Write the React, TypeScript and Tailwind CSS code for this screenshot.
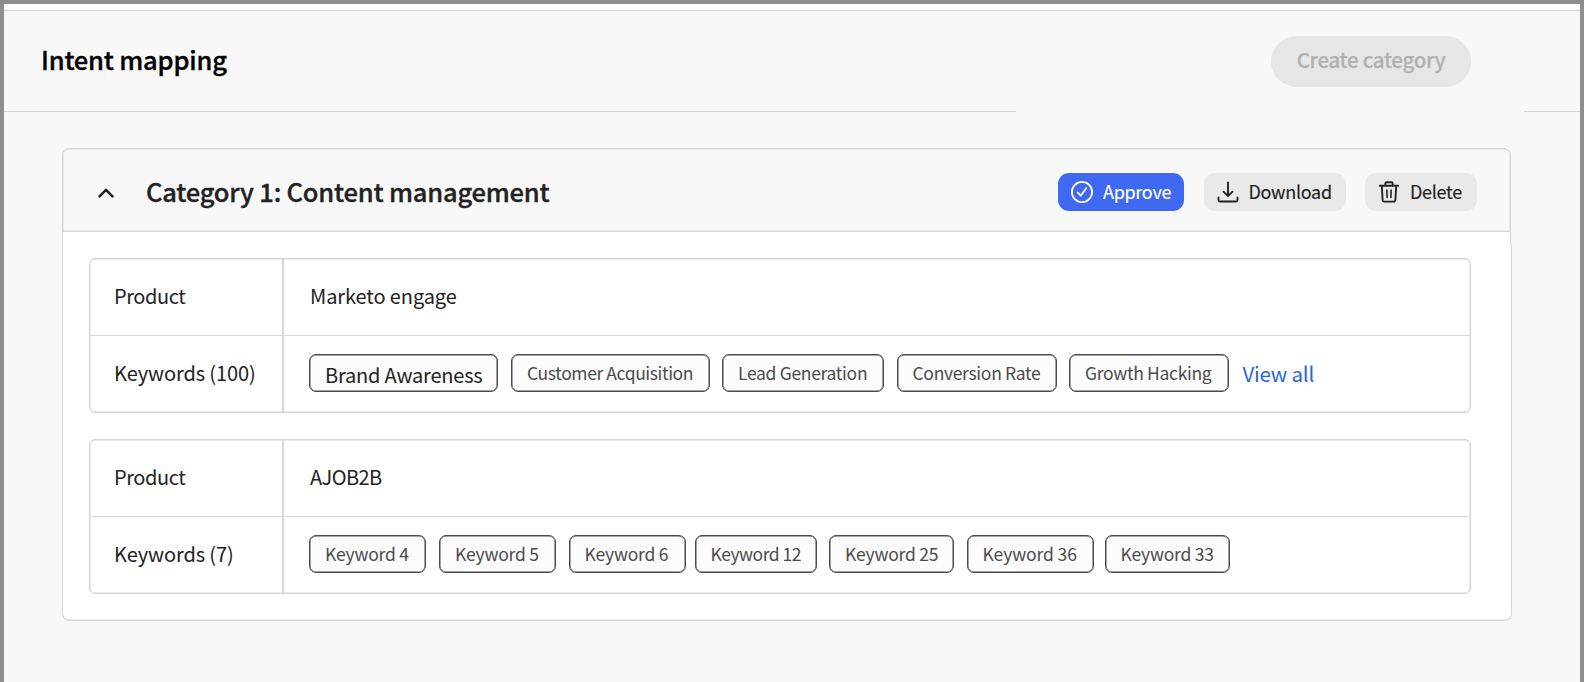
import type { ReactNode } from "react";

const clean = "font-['Noto_Sans_CJK_SC','Noto_Sans',sans-serif]";

function Chip({ children, className }: { children: ReactNode; className: string }) {
  return (
    <span
      className={`flex h-[38.500px] shrink-0 items-center rounded-[7px] border border-[#4b4b4b] bg-[#fcfcfc] pl-[15px] whitespace-nowrap shadow-[inset_0_0_0_0.5px_#4b4b4b] ${className}`}
    >
      {children}
    </span>
  );
}

function ProductTable({
  product,
  keywords,
  className,
  children,
}: {
  product: ReactNode;
  keywords: string;
  className: string;
  children: ReactNode;
}) {
  return (
    <section
      className={`grid h-[155px] w-[1382px] grid-cols-[194px_1fr] grid-rows-[77px_76px] rounded-[6px] border border-[#d5d5d5] text-[20px] leading-none tracking-[-0.1px] text-[#222222] shadow-[inset_0_0_0_0.5px_#d5d5d5] ${className}`}
    >
      <div className="flex items-center border-r-2 border-b border-[#d8d8d8] pb-[2px] pl-6 tracking-[-0.42px]">Product</div>
      <div className="flex items-center border-b border-[#d8d8d8] pb-[2px] pl-[26px]">{product}</div>
      <div className="flex items-center border-r-2 border-[#d8d8d8] pb-[2px] pl-6">{keywords}</div>
      <div className="flex items-center pb-[2px] pl-[25px]">{children}</div>
    </section>
  );
}

export default function App() {
  return (
    <div className={`h-[682px] w-[1584px] overflow-hidden border-x-4 border-t-4 border-[#8e8e8e] bg-[#f8f8f8] ${clean}`}>
      <div className="h-[6px] bg-white" />
      <header className="flex h-[101px] items-start justify-between border-t border-[#d5d5d5] pt-[25px] pr-[109px] pl-[37px]">
        <h1 className="mt-[8px] text-[25.500px] leading-[30px] font-medium tracking-[-0.2px] text-black [-webkit-text-stroke:0.35px]">
          Intent mapping
        </h1>
        <button className="h-[51px] w-[200px] rounded-full bg-[#e6e6e6] pb-[5px] text-[20.5px] leading-none font-medium tracking-[-0.3px] text-[#b1b1b1] [-webkit-text-stroke:0.25px]">
          Create category
        </button>
      </header>
      <div className="flex h-px justify-between">
        <div className="w-[1012px] bg-[#d5d5d5]" />
        <div className="w-[56px] bg-[#d5d5d5]" />
      </div>
      <main className="pt-[36px] pl-[58px]">
        <div className="flex h-[84px] w-[1449px] items-center rounded-t-[7px] border border-[#d5d5d5] pt-[3px] pl-[35px] shadow-[inset_0_0_0_0.5px_#d5d5d5]">
          <svg className="mt-[2px] h-[10px] w-4" viewBox="0 0 16 10" fill="none" stroke="#222" strokeWidth="2.6" strokeLinecap="round" strokeLinejoin="round">
            <path d="M1.500 8.300 8 1.800l6.500 6.500" />
          </svg>
          <h2 className="-mt-[2px] ml-[32px] w-[912px] text-[25.500px] leading-none font-medium tracking-[-0.2px] text-[#222222] [-webkit-text-stroke:0.35px]">
            Category 1: Content management
          </h2>
          <div className="flex text-[18px] leading-none tracking-[-0.3px] text-[#222222] [-webkit-text-stroke:0.15px]">
            <button className="flex h-[38px] w-[126px] items-center rounded-[11px] bg-[#4069f2] pl-[13px] text-white">
              <svg className="mr-[10px] size-[22px]" viewBox="0 0 22 22" fill="none" stroke="currentColor" strokeWidth="1.8" strokeLinecap="round" strokeLinejoin="round">
                <circle cx="11" cy="11" r="10.100" />
                <path d="m6.700 11.500 3 3.200 5.600-7.400" />
              </svg>
              <span className="-mt-[2px]">Approve</span>
            </button>
            <button className="ml-[19.500px] flex h-[38px] w-[142.500px] items-center rounded-[11px] bg-[#e9e9e9] pl-[13px]">
              <svg className="mr-[10px] size-[22px]" viewBox="0 0 22 22" fill="none" stroke="currentColor" strokeWidth="1.9" strokeLinecap="round" strokeLinejoin="round">
                <path d="M11 1.500v13.500M6.500 10.700l4.500 4.500 4.500-4.500M1.500 16.500v2.500q0 1.500 1.500 1.500h16q1.500 0 1.500-1.500v-2.500" />
              </svg>
              <span className="-mt-[2px]">Download</span>
            </button>
            <button className="ml-[19px] flex h-[38px] w-[112px] items-center rounded-[11px] bg-[#e9e9e9] pl-[13px]">
              <svg className="mr-[10px] size-[22px]" viewBox="0 0 22 22" fill="none" stroke="currentColor" strokeWidth="1.9" strokeLinecap="round" strokeLinejoin="round">
                <path d="M1.800 4.700h18.400M7.300 4.500V2.800q0-1.500 1.500-1.500h4.400q1.500 0 1.500 1.500v1.700M3.800 5l.8 13.700q.1 1.900 2 1.900h8.800q1.900 0 2-1.900L18.200 5" />
                <path strokeWidth="1.6" d="M8.900 9l.2 7.500M13.100 9l-.2 7.500" />
              </svg>
              <span className="-mt-[2px]">Delete</span>
            </button>
          </div>
        </div>
        <div className="h-[12px] w-[1449px] border-x border-[#d5d5d5] bg-white" />
        <div className="h-[377px] w-[1450px] rounded-b-[7px] border-x border-b border-[#d5d5d5] bg-white pt-[14px] pl-[26px] shadow-[inset_0_-0.5px_0_#d5d5d5]">
          <ProductTable product="Marketo engage" keywords="Keywords (100)" className="">
            <Chip className="w-[189px] pt-[3px] text-[20px] tracking-[-0.2px]">Brand Awareness</Chip>
            <div className="ml-[13px] flex gap-[12.500px] text-[17.500px] tracking-[-0.32px] text-[#4b4b4b]">
              <Chip className="w-[198.500px] tracking-[-0.4px]">Customer Acquisition</Chip>
              <Chip className="w-[162px]">Lead Generation</Chip>
              <Chip className="w-[160px]">Conversion Rate</Chip>
              <Chip className="w-[160px]">Growth Hacking</Chip>
            </div>
            <a className="ml-[13.500px] text-[20.500px] tracking-[-0.2px] text-[#1f65dc]">View all</a>
          </ProductTable>
          <ProductTable product={<span className="tracking-[-0.6px]">AJOB2B</span>} keywords="Keywords (7)" className="mt-[26px]">
            <div className="flex text-[17.500px] tracking-[-0.22px] text-[#4b4b4b]">
              <Chip className="w-[117px]">Keyword 4</Chip>
              <Chip className="ml-[13px] w-[117px]">Keyword 5</Chip>
              <Chip className="ml-[12.500px] w-[117px]">Keyword 6</Chip>
              <Chip className="ml-[9px] w-[122px] tracking-[-0.5px]">Keyword 12</Chip>
              <Chip className="ml-[12.500px] w-[125px]">Keyword 25</Chip>
              <Chip className="ml-[12.500px] w-[127px] tracking-[-0.12px]">Keyword 36</Chip>
              <Chip className="ml-[11px] w-[125px]">Keyword 33</Chip>
            </div>
          </ProductTable>
        </div>
      </main>
    </div>
  );
}
